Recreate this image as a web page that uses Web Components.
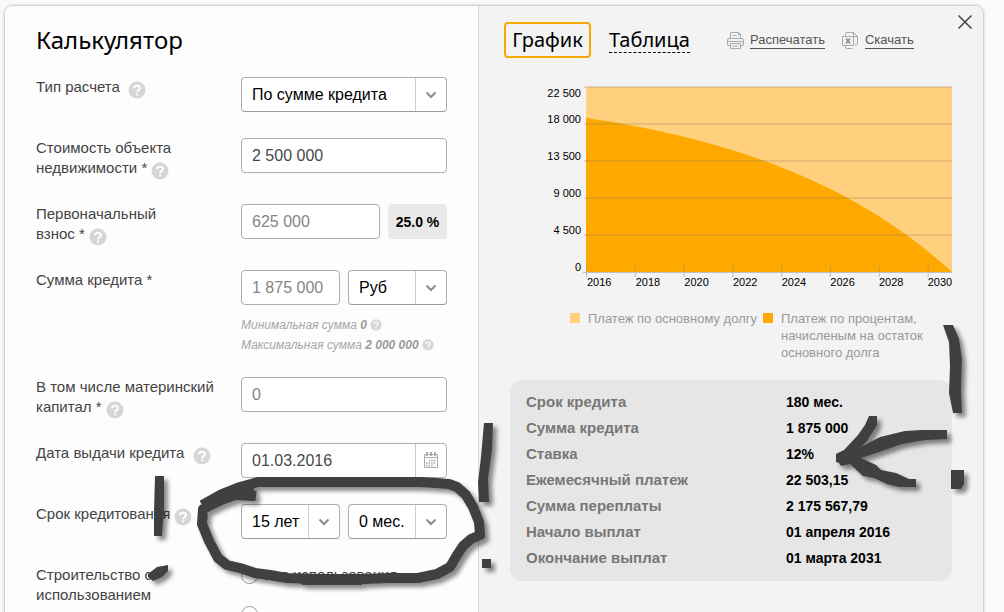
<!DOCTYPE html>
<html lang="ru">
<head>
<meta charset="utf-8">
<title>Калькулятор</title>
<style>
  body { margin: 0; height: 100vh; overflow: hidden; background: #fafafa; font-family: "Liberation Sans", Arial, sans-serif; }
</style>
</head>
<body>
<loan-calculator></loan-calculator>
<script>
const define = (name, html, setup) => {
  const tpl = document.createElement('template');
  tpl.innerHTML = html;
  customElements.define(name, class extends HTMLElement {
    constructor() {
      super();
      this.attachShadow({ mode: 'open' }).append(tpl.content.cloneNode(true));
    }
    connectedCallback() { if (setup) setup(this, this.shadowRoot); }
  });
};

define('help-mark', `
<style>
  :host { display: inline-block; width: 18px; height: 18px; margin: -2px 0; vertical-align: -5px; }
  :host([small]) { width: 12px; height: 12px; vertical-align: 0; }
  svg { display: block; width: 100%; height: 100%; }
</style>
<svg viewBox="0 0 18 18" aria-hidden="true"><circle cx="9" cy="9" r="8.5" fill="#d6d6d6"/><path d="M6 7.2C6 3.8 12 3.8 12 7.1c0 2-2.9 2-2.9 4.1M9.1 12.6v1.9" fill="none" stroke="#fff" stroke-width="2"/></svg>`);

define('form-row', `
<style>
  :host { display: grid; grid-template-columns: 205px minmax(0, 206px); margin-bottom: 26px; font-size: 15px; line-height: 20px; color: #444; }
  ::slotted(help-mark[wide]) { margin-left: 4px; }
  .fields { display: flex; flex-wrap: wrap; align-items: flex-start; column-gap: 8px; min-width: 0; }
</style>
<div class="label"><slot name="label"></slot></div>
<div class="fields"><slot></slot></div>`);

define('text-field', `
<style>
  :host { display: block; flex: 1 1 0; min-width: 0; }
  .box { display: flex; height: 35px; box-sizing: border-box; border: 1px solid #adadad; border-radius: 4px; background: #fff; overflow: hidden; }
  input { flex: 1; min-width: 0; border: 0; padding: 0 10px; background: none; font: 16px "Liberation Sans", Arial, sans-serif; color: #484848; outline: 0; }
  :host([muted]) input { color: #858585; }
</style>
<div class="box"><input type="text"><slot></slot></div>`, (el, root) => {
  const i = root.querySelector('input');
  i.value = el.getAttribute('value');
  i.setAttribute('aria-label', el.getAttribute('label'));
});

define('calendar-button', `
<style>
  :host { display: block; flex: none; }
  button { display: grid; place-items: center; width: 31px; height: 33px; padding: 0; border: 0; border-left: 1px solid #ccc; background: none; }
</style>
<button type="button" aria-label="Открыть календарь"><svg width="16" height="17" viewBox="0 0 16 17" fill="none" stroke="#aaa"><path d="M1.5 2.5h13v13h-13zM1 5.5h14"/><path d="M4 0v4M8 0v4M12 0v4" stroke-width="2"/><path d="M6 8.5h7M3 11h10M3 13.5h8" stroke-width="1.5" stroke-dasharray="1.5 1"/></svg></button>`);

define('select-field', `
<style>
  :host { display: block; flex: 1 1 0; min-width: 0; }
  .box { display: grid; grid-template-columns: minmax(0, 1fr) 31px; height: 35px; box-sizing: border-box; border: 1px solid #adadad; border-bottom-color: #999; border-radius: 4px; background: #fff; }
  select { grid-area: 1 / 1 / 2 / 3; appearance: none; border: 0; padding: 0 0 0 10px; margin: 0; background: none; font: 16px "Liberation Sans", Arial, sans-serif; color: #000; outline: 0; }
  .arrow { grid-area: 1 / 2; display: grid; place-items: center; border-left: 1px solid #ccc; pointer-events: none; }
</style>
<div class="box"><select></select><span class="arrow"><svg width="12" height="8" viewBox="0 0 12 8"><path d="M1.5 1.5 6 6l4.5-4.5" fill="none" stroke="#8c8c8c" stroke-width="2"/></svg></span></div>`, (el, root) => {
  const s = root.querySelector('select');
  s.innerHTML = '<option>' + el.getAttribute('value') + '</option>';
  s.setAttribute('aria-label', el.getAttribute('label'));
});

define('percent-badge', `
<style>
  :host { display: grid; place-items: center; flex: none; width: 59px; height: 35px; border-radius: 4px; background: #e9e9e9; font: bold 14px "Liberation Sans", Arial, sans-serif; color: #000; }
</style><slot></slot>`);

define('sum-hints', `
<style>
  :host { display: block; flex: 1 0 100%; margin: 10px 0 -4px; font-size: 12px; font-style: italic; color: #a5a5a5; white-space: nowrap; }
  b { color: #999; }
</style>
<div>Минимальная сумма <b>0</b> <help-mark small></help-mark></div>
<div>Максимальная сумма <b>2 000 000</b> <help-mark small></help-mark></div>`);

define('radio-list', `
<style>
  :host { display: block; }
  label { display: flex; align-items: center; gap: 6px; height: 20px; margin-bottom: 19px; white-space: nowrap; }
  input { appearance: none; flex: none; width: 17px; height: 17px; margin: 0; border: 1px solid #999; border-radius: 50%; background: #fff; }
</style>
<label><input type="radio" name="build">Без использования</label>
<label><input type="radio" name="build" aria-label="Другой вариант"></label>`);

define('calculator-form', `
<style>
  :host { display: block; padding: 18px 20px 0 31px; background: #fdfdfd; border-right: 1px solid #d8d8d8; }
  h1 { margin: 0 0 21px; font: 24px/32px "Noto Sans", sans-serif; color: #000; }
</style>
<h1>Калькулятор</h1>
<form-row><span slot="label">Тип расчета </span><help-mark slot="label" wide></help-mark><select-field label="Тип расчета" value="По сумме кредита"></select-field></form-row>
<form-row><span slot="label">Стоимость объекта<br>недвижимости * </span><help-mark slot="label"></help-mark><text-field label="Стоимость объекта недвижимости" value="2 500 000"></text-field></form-row>
<form-row><span slot="label">Первоначальный<br>взнос * </span><help-mark slot="label"></help-mark><text-field muted label="Первоначальный взнос" value="625 000"></text-field><percent-badge>25.0 %</percent-badge></form-row>
<form-row><span slot="label">Сумма кредита *</span><text-field muted label="Сумма кредита" value="1 875 000"></text-field><select-field label="Валюта" value="Руб"></select-field><sum-hints></sum-hints></form-row>
<form-row><span slot="label">В том числе материнский<br>капитал * </span><help-mark slot="label"></help-mark><text-field muted label="Материнский капитал" value="0"></text-field></form-row>
<form-row><span slot="label">Дата выдачи кредита </span><help-mark slot="label" wide></help-mark><text-field label="Дата выдачи кредита" value="01.03.2016"><calendar-button></calendar-button></text-field></form-row>
<form-row><span slot="label">Срок кредитования </span><help-mark slot="label"></help-mark><select-field label="Лет" value="15 лет"></select-field><select-field label="Месяцев" value="0 мес."></select-field></form-row>
<form-row><span slot="label">Строительство с<br>использованием</span><radio-list></radio-list></form-row>`);

define('result-toolbar', `
<style>
  :host { display: flex; align-items: center; height: 36px; }
  button { padding: 0; border: 0; background: none; color: #000; font: 20px/28px "Noto Sans", sans-serif; }
  .on { box-sizing: border-box; width: 87px; height: 36px; border: 2px solid #f5a800; border-radius: 4px; }
  .off { margin-left: 18px; height: 26px; line-height: 24px; border-bottom: 1px dashed #000; }
  a { font-size: 13px; line-height: 16px; color: #555; text-decoration: none; border-bottom: 1px solid #555; margin-left: 6px; }
  svg { flex: none; }
  .print { margin-left: 37px; }
  .xls { margin-left: 17px; }
</style>
<button type="button" class="on">График</button><button type="button" class="off">Таблица</button>
<svg class="print" width="17" height="17" viewBox="0 0 17 17" fill="none" stroke="#aaa"><path d="M3.5 6.500v-6h8l2 2v4M11.5.5v2h2M5.5 3.5h4M3.5 13.5H2A1.5 1.5 0 0 1 .5 12V8A1.5 1.5 0 0 1 2 6.5h13A1.5 1.5 0 0 1 16.5 8v4a1.5 1.5 0 0 1-1.5 1.5h-1.5M.5 9.5h16M3.5 11.5h10v5h-10zM5.5 14h6"/></svg>
<a href="#print">Распечатать</a>
<svg class="xls" width="17" height="17" viewBox="0 0 17 17" fill="none" stroke="#aaa"><path d="M3.5 4V2A1.5 1.5 0 0 1 5 .5h6.5l4 4v7a1.500 1.500 0 0 1-1.5 1.5h-1.500M11.5.5v4h4M.5 4.500h11v9H.5zM3.500 13.500V15A1.500 1.500 0 0 0 5 16.500h5.500"/><path d="m4 6.500 4 5M8 6.500l-4 5" stroke="#888" stroke-width="1.5"/></svg>
<a href="#download">Скачать</a>`);

define('close-button', `
<style>
  :host { display: block; position: absolute; top: 7px; right: 9px; }
  button { display: block; padding: 1px; border: 0; background: none; }
  svg { display: block; }
</style>
<button type="button" aria-label="Закрыть"><svg width="16" height="16" viewBox="0 0 16 16"><path d="m1.5 1.5 13 13m0-13-13 13" stroke="#444" stroke-width="1.5"/></svg></button>`);

define('payment-chart', `
<style>
  :host { display: grid; grid-template-columns: 71px minmax(0, 1fr); column-gap: 5px; margin-top: 29px; font-size: 11px; color: #000; }
  .y { display: flex; flex-direction: column; text-align: right; line-height: 37px; height: 185px; margin-top: -2px; }
  .y span:first-child { line-height: 16px; }
  svg { display: block; width: 100%; height: 185px; overflow: visible; }
  .x { grid-column: 2; display: grid; grid-template-columns: repeat(7, minmax(0, 2fr)) minmax(0, 1fr); line-height: 13px; margin-top: 4px; padding-left: 1px; }
</style>
<div class="y"><span>22 500</span><span>18 000</span><span>13 500</span><span>9 000</span><span>4 500</span><span>0</span></div>
<svg viewBox="0 0 365 185" preserveAspectRatio="none"><rect width="365" height="185" fill="#ffd07d"/><path class="area" fill="#ffa800"/><path class="grid" fill="none" stroke="#8a7a5a" stroke-opacity=".22" stroke-width="2"/><path class="ticks" fill="none" stroke="#8a8a8a" stroke-opacity=".5"/></svg>
<div class="x"><span>2016</span><span>2018</span><span>2020</span><span>2022</span><span>2024</span><span>2026</span><span>2028</span><span>2030</span></div>`, (el, root) => {
  // Share of interest in an annuity payment: 12% a year over 180 months.
  let d = 'M0 185';
  for (let m = 0; m <= 180; m += 5) d += 'L' + (m / 180 * 365) + ' ' + (185 * Math.pow(1.01, m - 180));
  root.querySelector('.area').setAttribute('d', d + 'Z');
  let g = 'M-2 0H365', t = 'M-3 185.5H365';
  for (let i = 1; i < 5; i++) g += 'M-2 ' + i * 37 + 'H365';
  for (let i = 0; i < 8; i++) t += 'M' + (0.5 + i * 365 / 7.5) + ' 179v11';
  root.querySelector('.grid').setAttribute('d', g);
  root.querySelector('.ticks').setAttribute('d', t);
});

define('chart-legend', `
<style>
  :host { display: flex; margin: 21px 0 0 60px; gap: 6px; font-size: 13px; line-height: 17px; color: #999; }
  div { display: flex; gap: 8px; }
  div:first-child { white-space: nowrap; }
  i { flex: none; width: 10px; height: 10px; margin-top: 3px; background: #ffd07d; }
  .deep { background: #ffa800; }
  .wrap { max-width: 150px; }
</style>
<div><i></i><span>Платеж по основному долгу</span></div>
<div><i class="deep"></i><span class="wrap">Платеж по процентам, начисленым на остаток основного долга</span></div>`);

define('loan-summary', `
<style>
  :host { display: block; margin-top: 19px; padding: 9px 16px 10px; border-radius: 12px; background: #e6e6e6; }
  table { width: 100%; border-collapse: collapse; table-layout: fixed; font-weight: bold; line-height: 26px; }
  th, td { padding: 0; text-align: left; }
  th { width: 260px; font-size: 15px; color: #777; }
  td { font-size: 14px; color: #000; }
</style>
<table>
<tr><th scope="row">Срок кредита</th><td>180 мес.</td></tr>
<tr><th scope="row">Сумма кредита</th><td>1 875 000</td></tr>
<tr><th scope="row">Ставка</th><td>12%</td></tr>
<tr><th scope="row">Ежемесячный платеж</th><td>22 503,15</td></tr>
<tr><th scope="row">Сумма переплаты</th><td>2 175 567,79</td></tr>
<tr><th scope="row">Начало выплат</th><td>01 апреля 2016</td></tr>
<tr><th scope="row">Окончание выплат</th><td>01 марта 2031</td></tr>
</table>`);

define('result-panel', `
<style>
  :host { display: block; position: relative; background: #f3f3f3; padding: 16px 31px 0; border-radius: 0 8px 0 0; }
  result-toolbar { margin-left: -6px; }
</style>
<close-button></close-button>
<result-toolbar></result-toolbar>
<payment-chart></payment-chart>
<chart-legend></chart-legend>
<loan-summary></loan-summary>`);

define('marker-strokes', `
<style>
  :host { display: block; position: absolute; inset: 0; overflow: hidden; pointer-events: none; }
  svg { display: block; filter: drop-shadow(4px 4px 2px rgba(0,0,0,.45)); }
</style>
<svg width="1004" height="612" viewBox="0 0 1004 612" fill="#404040" aria-hidden="true">
<path fill="none" stroke="#404040" stroke-width="10" stroke-linejoin="round" d="M256 496 238 494 221 500 203 509 202 524 209 541 218 558 227 565 240 568 255 573 270 575 287 578 320 579 363 579 388 578 418 578 437 574 450 567 457 555 463 546 471 539 480 535 479 522 473 507 466 495 457 487 449 484 436 483 420 482H258L240 487 220 495 202 505"/>
<path d="M233 486 254 488V501L236 500 215 504ZM300 575 362 578V585H303L296 581Z"/>
<path d="M155 476h9v33l-2 27h-8v-24ZM148 574l9-7 11-2v6l-6 6-9 4-5-4Z"/>
<path d="M484 423h9l-1 27-4 28 1 24h-10l-1-20 3-25ZM482 559h9v9h-9Z"/>
<path d="M943 325h10l6 14 3 20-1 30 1 24h-9l-4-20 1-27-1-24ZM951 470h13v14l-3 5h-10Z"/>
<path d="M869 416h8v9l-10 16-6 6 19-10 25-6 17-1h25v9l-22 1-23 4-20 7-21 7 15 7 5 5 15 3 13 6h7v8h-17l-12-3-13-6-11-2-13-12-9 2-2-3-3-1v-8l8-4 14-15 7-10Z"/>
</svg>`);

define('loan-calculator', `
<style>
  :host { display: block; position: relative; box-sizing: border-box; height: 100vh; overflow: hidden; padding: 5px 20px 0 4px; }
  .sheet { display: grid; grid-template-columns: minmax(0, 474fr) minmax(0, 504fr); border: 1px solid #d2d2d2; border-radius: 9px 9px 0 0; box-shadow: 0 0 3px #ccc; overflow: hidden; }
</style>
<div class="sheet"><calculator-form></calculator-form><result-panel></result-panel></div>
<marker-strokes></marker-strokes>`);
</script>
</body>
</html>
